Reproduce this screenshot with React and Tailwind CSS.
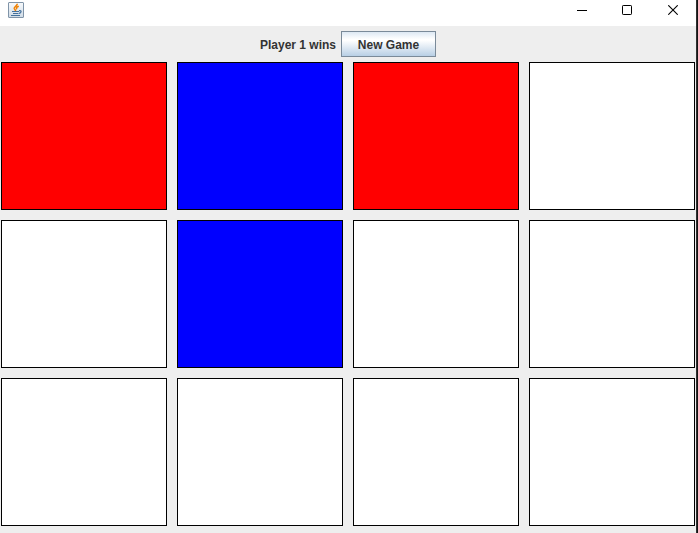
const cells = [
  'bg-[#ff0000]', 'bg-[#0000ff]', 'bg-[#ff0000]', 'bg-white',
  'bg-white', 'bg-[#0000ff]', 'bg-white', 'bg-white',
  'bg-white', 'bg-white', 'bg-white', 'bg-white',
];

function JavaIcon() {
  return (
    <svg width="16" height="16" viewBox="0 0 16 16" fill="none">
      <defs>
        <linearGradient id="tile" x1="0" y1="0" x2="0" y2="1">
          <stop offset="0" stopColor="#f8fafc" />
          <stop offset="1" stopColor="#cfdbe6" />
        </linearGradient>
      </defs>
      <rect x="0.5" y="0.5" width="15" height="15" rx="0.5" fill="url(#tile)" stroke="#8094a8" />
      <path d="M9.300 1.800C9.500 4 6 4.700 6.200 6.400C6.500 7.500 7.700 7.700 7.500 9M10.800 4.300C8 5.200 8.200 6.400 9 7.200" stroke="#f08000" strokeWidth="1.500" />
      <path d="M4 9.500H11M5 11.500H10.500M3 13.500H12M11 8.700C14 8 13.500 11 11 11.400" stroke="#44719c" strokeWidth="1.200" />
    </svg>
  );
}

function TitleBar() {
  return (
    <header className="flex h-[26px] shrink-0 justify-between bg-white pl-2">
      <div className="pt-[2px]"><JavaIcon /></div>
      <div className="flex h-5 items-center">
        <button aria-label="Minimize" className="flex w-[46px] justify-center">
          <svg width="10" height="10" shapeRendering="crispEdges"><path d="M0 5.500H10" stroke="black" /></svg>
        </button>
        <button aria-label="Maximize" className="flex w-[45px] justify-center pr-px">
          <svg width="10" height="10" fill="none"><rect x="0.500" y="0.500" width="9" height="9" rx="0.700" stroke="black" /></svg>
        </button>
        <button aria-label="Close" className="flex w-[46px] justify-center">
          <svg width="10" height="10"><path d="M0.300 0.300L9.700 9.700M9.700 0.300L0.300 9.700" stroke="black" strokeWidth="1.100" /></svg>
        </button>
      </div>
    </header>
  );
}

export default function App() {
  return (
    <div className="flex h-[533px] w-[698px] overflow-hidden bg-[#eeeeee] font-['Liberation_Sans',Arial,sans-serif]">
      <div className="flex min-w-0 flex-1 flex-col">
        <TitleBar />
        <div className="flex h-9 shrink-0 items-start pt-[5px] pl-[260px]">
          <span className="w-[81px] text-[12px] leading-[29px] font-bold whitespace-nowrap text-[#333333]">Player 1 wins</span>
          <button className="h-[26px] w-[95px] border border-[#7a8a99] bg-[linear-gradient(to_bottom,#dde8f3_0%,#ffffff_30%,#ffffff_35%,#b8cfe5_100%)] pt-px text-[12px] leading-[25px] font-bold whitespace-nowrap text-[#333333]">New Game</button>
        </div>
        <main className="ml-px grid w-[694px] grid-cols-4 gap-[10px]">
          {cells.map((color, i) => (
            <div key={i} className={`h-[148px] border border-black ${color}`} />
          ))}
        </main>
      </div>
      <div className="w-[2px] shrink-0 border-l border-[#303030] bg-[#141414]" />
    </div>
  );
}
